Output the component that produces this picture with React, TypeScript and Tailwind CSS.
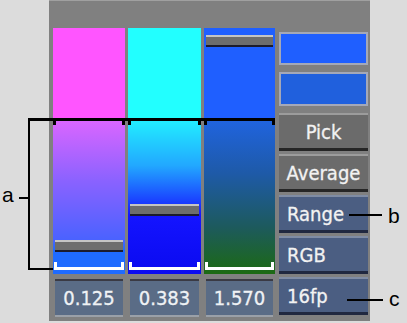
import React from "react";

interface ChannelProps {
  top: string;
  lower: string;
  handleTop: number;
  value: string;
  width: string;
}

// top of handle is given in px from the column top
const Channel = ({ top, lower, handleTop, value, width }: ChannelProps) => (
  <div className={`flex flex-col ${width}`}>
    <div className="relative h-[246px] flex flex-col">
      <div className={`h-[91px] ${top}`} />
      <div className={`flex-1 ${lower}`} />
      {/* black bracket ticks */}
      <div className="absolute left-0 top-[90px] w-[3px] h-[7px] bg-black" />
      <div className="absolute right-0 top-[90px] w-[3px] h-[7px] bg-black" />
      {/* white bracket */}
      <div className="absolute left-[1px] right-[1px] top-[239px] h-[3px] bg-white" />
      <div className="absolute left-[1px] top-[234px] w-[3px] h-[8px] bg-white" />
      <div className="absolute right-[1px] top-[234px] w-[3px] h-[8px] bg-white" />
      {/* slider handle */}
      <div
        className="absolute left-[2px] right-[2px] h-[12px] bg-[#6d6d6d] border-t-2 border-t-[#c4c4c4] border-b-2 border-b-[#1c1c2c]"
        style={{ top: handleTop }}
      />
    </div>
    <div className="mt-[5px] mx-[2px] h-[38px] bg-[#5a6c86] border-t-2 border-t-[#3a3a44] border-b-2 border-b-[#9aa0a8] flex items-center justify-center text-[20px] text-[#eef2f6]">
      {value}
    </div>
  </div>
);

const Btn = ({ label, blue }: { label: string; blue?: boolean }) => (
  <div
    className={`h-[38px] flex items-center text-[20px] text-[#f2f2f2] border-t-2 border-b-[3px] ${
      blue
        ? "bg-[#4b5e82] border-t-[#7f8ca4] border-b-[#202840] pl-[8px]"
        : "bg-[#6b6b6b] border-t-[#9c9c9c] border-b-[#262626] justify-center"
    }`}
  >
    {label}
  </div>
);

export default function App() {
  return (
    <div className="relative w-[407px] h-[323px] bg-[#dcdcdc] flex font-['DejaVu_Sans_Condensed',sans-serif] [-webkit-text-stroke:0.3px_#f2f2f2]">
      <div className="w-[49px]" />
      <div className="w-[321px] h-[321px] bg-[#808080] border-t border-t-[#a0a0a0] flex gap-[3px] pl-[4px] pt-[27px]">
        <Channel
          width="w-[72px]"
          top="bg-[#ff55ff]"
          lower="bg-[linear-gradient(180deg,#dc66ff_0%,#8a62ff_40%,#4a62ff_78%,#1f6bff_85%,#1f6bff_100%)]"
          handleTop={212}
          value="0.125"
        />
        <Channel
          width="w-[73px]"
          top="bg-[#22ffff]"
          lower="bg-[linear-gradient(180deg,#22f0ff_0%,#22a8ff_30%,#1a3cff_54%,#1414ff_62%,#0a0af0_100%)]"
          handleTop={176}
          value="0.383"
        />
        <Channel
          width="w-[71px]"
          top="bg-[#1f5fff]"
          lower="bg-[linear-gradient(180deg,#2064e0_0%,#1e5aa8_35%,#1d5a5c_70%,#1c6a12_100%)]"
          handleTop={7}
          value="1.570"
        />
        <div className="ml-[1px] w-[89px] flex flex-col pt-[4px]">
          <div className="h-[33px] bg-[#1f5fff] border-2 border-[#a4a8b8]" />
          <div className="mt-[7px] h-[34px] bg-[#2060dd] border-2 border-[#a4a8b8]" />
          <div className="mt-[7px] flex flex-col gap-[3px]">
            <Btn label="Pick" />
            <Btn label="Average" />
            <Btn label="Range" blue />
            <Btn label="RGB" blue />
            <Btn label="16fp" blue />
          </div>
        </div>
      </div>

      {/* annotations */}
      <div className="absolute left-[29px] top-[118px] w-[245px] h-[3px] bg-black" />
      <div className="absolute left-[28px] top-[118px] w-[2px] h-[152px] bg-black" />
      <div className="absolute left-[28px] top-[268px] w-[25px] h-[2px] bg-black" />
      <div className="absolute left-[19px] top-[197px] w-[10px] h-[2px] bg-black" />
      <span className="absolute left-[2px] top-[184px] text-[21px] leading-none text-black [-webkit-text-stroke:0] font-['Liberation_Sans',sans-serif]">
        a
      </span>
      <div className="absolute left-[349px] top-[214px] w-[33px] h-[2px] bg-black" />
      <span className="absolute left-[388px] top-[205px] text-[21px] leading-none text-black [-webkit-text-stroke:0] font-['Liberation_Sans',sans-serif]">
        b
      </span>
      <div className="absolute left-[347px] top-[299px] w-[36px] h-[2px] bg-black" />
      <span className="absolute left-[389px] top-[288px] text-[21px] leading-none text-black [-webkit-text-stroke:0] font-['Liberation_Sans',sans-serif]">
        c
      </span>
    </div>
  );
}
